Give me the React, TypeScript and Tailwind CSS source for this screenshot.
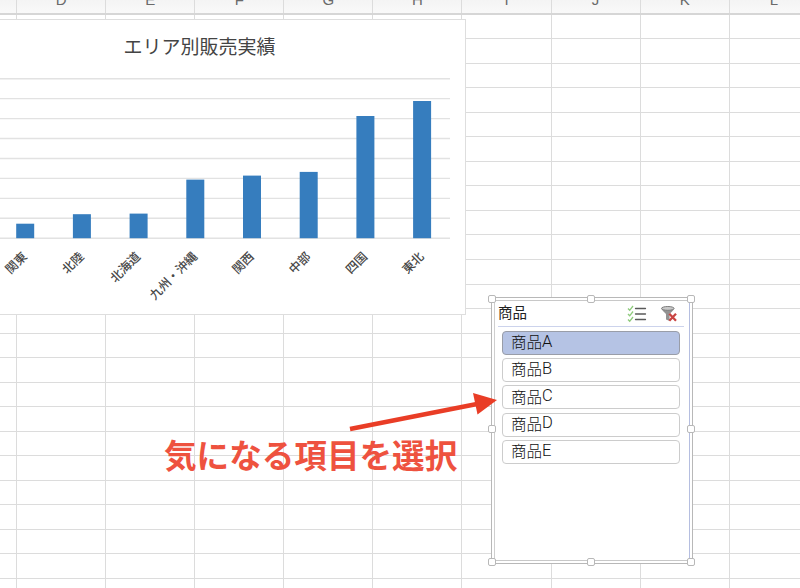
import { useState } from "react";
import clsx from "clsx";

const columns = ["D", "E", "F", "G", "H", "I", "J", "K", "L"];
const rows = Array.from({ length: 24 }, (_, i) => i);

const sales = [
  { area: "関東", height: 14.5 },
  { area: "北陸", height: 24 },
  { area: "北海道", height: 24.6 },
  { area: "九州・沖縄", height: 58.6 },
  { area: "関西", height: 62.6 },
  { area: "中部", height: 66.3 },
  { area: "四国", height: 122.2 },
  { area: "東北", height: 137.2 },
];

const products = ["A", "B", "C", "D", "E"];

const handles = [
  "-left-[4px] -top-[3px]",
  "left-[95px] -top-[3px]",
  "-right-[3px] -top-[3px]",
  "-left-[4px] top-[127px]",
  "-right-[3px] top-[127px]",
  "-left-[4px] -bottom-[3px]",
  "left-[95px] -bottom-[3px]",
  "-right-[3px] -bottom-[3px]",
];

function Sheet() {
  return (
    <div className="flex h-full w-[840px] flex-col">
      <div className="flex h-[15px] shrink-0 overflow-hidden border-b-2 border-[#d6d6d6] bg-linear-to-b from-[#f4f4f4] to-[#f9f9f9] font-['Liberation_Sans',sans-serif]">
        <div className="w-[17px] shrink-0 border-r border-[#dcdcdc]" />
        {columns.map((name) => (
          <div
            key={name}
            className="flex h-[13px] w-[89.1px] shrink-0 items-end justify-center border-r border-[#dcdcdc] pb-[6px] text-[15px] leading-[15px] text-[#6a6a6a]"
          >
            {name}
          </div>
        ))}
      </div>
      <div className="-mt-[0.3px] flex flex-col">
        {rows.map((row) => (
          <div key={row} className="flex h-[24.54px] shrink-0 border-b border-[#dcdcdc]">
            <div className="w-[17px] shrink-0 border-r border-[#dcdcdc]" />
            {columns.map((name) => (
              <div key={name} className="w-[89.1px] shrink-0 border-r border-[#dcdcdc]" />
            ))}
          </div>
        ))}
      </div>
    </div>
  );
}

function SalesChart() {
  return (
    <div className="absolute left-0 top-[19px] flex h-[296px] w-[466px] flex-col border-y border-r border-[#dedede] bg-white">
      <h2 className="pl-[123.5px] pt-[12px] text-[19px] leading-[28px] text-[#444]">エリア別販売実績</h2>
      <svg className="mt-[11px] h-[240px] w-full" viewBox="0 0 465 240">
        {Array.from({ length: 9 }, (_, i) => (
          <line key={i} x1="0" x2="450" y1={7.7 + i * 19.94} y2={7.7 + i * 19.94} stroke="#e2e2e2" strokeWidth="1.4" />
        ))}
        {sales.map(({ area, height }, i) => (
          <g key={area}>
            <rect x={16.2 + i * 56.7} y={167.2 - height} width="18" height={height} fill="#367dbe" />
            <text
              transform={`translate(${24.3 + i * 56.7} 182.8) rotate(-45)`}
              textAnchor="end"
              dominantBaseline="central"
              fontSize="12.2"
              fontWeight="500"
              fill="#484848"
            >
              {area}
            </text>
          </g>
        ))}
      </svg>
    </div>
  );
}

function MultiSelectIcon() {
  return (
    <svg width="20" height="18" viewBox="0 0 20 18" fill="none">
      <path d="M1 3.5l1.700 1.800L6 1M1 9l1.700 1.800L6 6.500M1 14.500l1.700 1.800L6 12" stroke="#8ecb7c" strokeWidth="1.3" />
      <path d="M8.500 3.500h10M8.500 9h10M8.500 14.500h10" stroke="#5a5a5a" strokeWidth="1.3" strokeLinecap="round" />
    </svg>
  );
}

function ClearFilterIcon() {
  return (
    <svg width="18" height="18" viewBox="0 0 18 18" fill="none">
      <path d="M1.400 3.500c0 2 4.600 4.400 4.600 6v5l3.600 1.500V9.500c0-1.600 4.600-4 4.600-6z" fill="#929292" />
      <ellipse cx="7.800" cy="3.400" rx="6.300" ry="1.900" fill="#c9c9c9" stroke="#7d7d7d" />
      <path d="M9.300 8.800l6.700 7M16 8.800l-6.700 7" stroke="#c94442" strokeWidth="2.300" />
    </svg>
  );
}

function Slicer() {
  const [selected, setSelected] = useState("A");

  return (
    <div className="absolute left-[491px] top-[297px] h-[267px] w-[202px] border border-[#b8b8b8] bg-white p-[2px]">
      <div className="h-full border border-r-[#b5bee0] border-b-[#c8c8c8] border-l-[#cfcfcf] border-t-[#c8c8c8] pl-[3px] pr-[5px]">
        <div className="flex h-[26px] items-center border-b border-[#ccd3ec]">
          <span className="mt-[-2px] grow text-[14.5px] leading-none text-[#222]">商品</span>
          <button aria-label="複数選択" className="mr-[13px]">
            <MultiSelectIcon />
          </button>
          <button aria-label="フィルターのクリア" className="mr-[6px]">
            <ClearFilterIcon />
          </button>
        </div>
        <div className="flex flex-col gap-[3.2px] pl-[4px] pr-[4px] pt-[4px]">
          {products.map((name) => (
            <button
              key={name}
              onClick={() => setSelected(name)}
              className={clsx(
                "flex h-6 items-center rounded-[4px] border pb-[2px] pl-[8px] text-[15.5px] leading-none font-light text-[#111]",
                selected === name ? "border-[#999da8] bg-[#b5c3e4]" : "border-[#cccccc] bg-white"
              )}
            >
              商品
              <span className="font-['Roboto',sans-serif] text-[16.5px]">{name}</span>
            </button>
          ))}
        </div>
      </div>
      {handles.map((position) => (
        <span key={position} className={clsx("absolute size-[8px] rounded-[2px] border border-[#b8b8b8] bg-white", position)} />
      ))}
    </div>
  );
}

export default function App() {
  return (
    <div className="relative h-[588px] w-[800px] overflow-hidden bg-white font-['Noto_Sans_CJK_JP',sans-serif]">
      <Sheet />
      <SalesChart />
      <Slicer />
      <p className="absolute left-[164px] top-[430px] text-[32.6px] leading-[48px] font-bold whitespace-nowrap text-[#ee523f]">
        気になる項目を選択
      </p>
      <svg className="absolute left-[345px] top-[388px]" width="156" height="48" viewBox="0 0 156 48">
        <path d="M5 41L132 16" stroke="#e93d26" strokeWidth="4.500" />
        <path d="M128 5l24 7-19.500 14.500z" fill="#e93d26" />
      </svg>
    </div>
  );
}
